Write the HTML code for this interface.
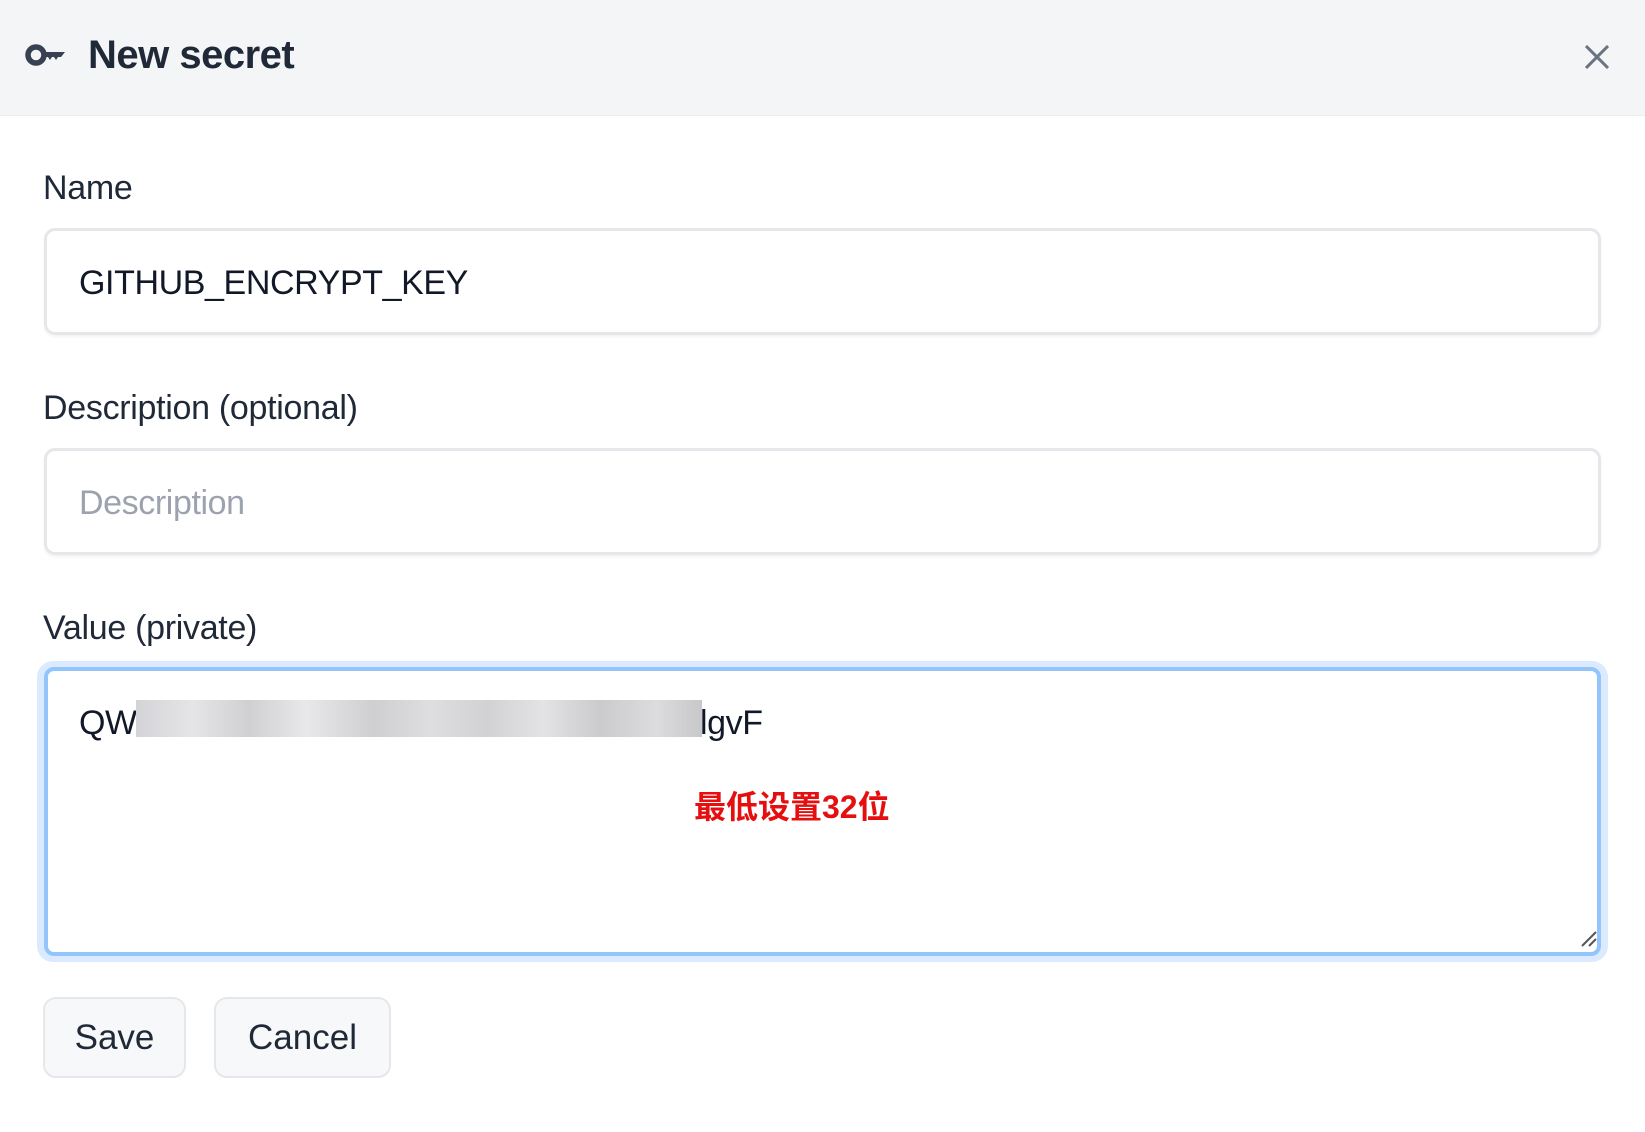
<!DOCTYPE html>
<html><head><meta charset="utf-8"><style>
html,body{margin:0;padding:0;width:1645px;height:1132px;background:#fff;overflow:hidden;font-family:"Liberation Sans","Noto Sans CJK SC",sans-serif;color:#111827}
.hdr{position:absolute;left:0;top:0;width:1645px;height:115px;background:#f4f5f7;border-bottom:1px solid #eceef1}
.title{position:absolute;left:88px;top:33px;font-size:40px;font-weight:bold;color:#1f2937;letter-spacing:-0.5px}
.lbl{position:absolute;left:43px;font-size:34px;color:#1f2937;letter-spacing:-0.3px}
.inp{position:absolute;left:44px;width:1557px;border:3px solid #e5e7eb;border-radius:11px;box-sizing:border-box;background:#fff;box-shadow:0 2px 3px rgba(0,0,0,.05)}
.txt{position:absolute;left:79px;font-size:34px;color:#111827;letter-spacing:-0.4px}
.btn{position:absolute;top:997px;height:81px;box-sizing:border-box;border:2px solid #e5e7eb;border-radius:13px;background:#f7f8fa;font-size:35px;color:#1f2937;text-align:center;line-height:77px}
</style></head><body>
<div class="hdr"></div>
<svg style="position:absolute;left:25px;top:42px" width="41" height="26" viewBox="0 0 41 26">
<circle cx="11" cy="13" r="8" fill="none" stroke="#374151" stroke-width="5.5"/>
<path d="M18 10 H40 L36 15 H33 L31 18 L29 15 H27 L25 18 L23 15 H18 Z" fill="#374151"/>
</svg>
<div class="title">New secret</div>
<svg style="position:absolute;left:1585px;top:45px" width="24" height="24" viewBox="0 0 24 24"><path d="M1 1L23 23M23 1L1 23" stroke="#6b7280" stroke-width="3"/></svg>

<div class="lbl" style="top:169px">Name</div>
<div class="inp" style="top:228px;height:107px"></div>
<div class="txt" style="top:264px">GITHUB_ENCRYPT_KEY</div>

<div class="lbl" style="top:389px">Description (optional)</div>
<div class="inp" style="top:448px;height:107px"></div>
<div class="txt" style="top:484px;color:#9ca3af">Description</div>

<div class="lbl" style="top:609px">Value (private)</div>
<div style="position:absolute;left:37px;top:661px;width:1571px;height:301px;border-radius:16px;background:#dbeafe"></div>
<div class="inp" style="top:667px;height:289px;border:4px solid #93c5fd;border-radius:10px;box-shadow:none"></div>
<div class="txt" style="top:704px">QW</div>
<div style="position:absolute;left:136px;top:700px;width:566px;height:37px;background:linear-gradient(90deg,#d4d4d8 0,#e5e5e7 10%,#d0d0d3 20%,#e8e8ea 30%,#cfcfd2 42%,#dedee0 52%,#d2d2d5 62%,#e3e3e5 72%,#cbcbce 82%,#dcdcde 92%,#c8c8cb 100%)"></div>
<div class="txt" style="left:700px;top:704px">lgvF</div>
<div style="position:absolute;left:694px;top:782px;font-size:32px;font-weight:bold;color:#e50f0f">最低设置32位</div>
<svg style="position:absolute;left:1580px;top:930px" width="18" height="18"><path d="M2 16L16 2M9 16L16 9" stroke="#555" stroke-width="2"/></svg>

<div class="btn" style="left:43px;width:143px">Save</div>
<div class="btn" style="left:214px;width:177px">Cancel</div>
</body></html>
